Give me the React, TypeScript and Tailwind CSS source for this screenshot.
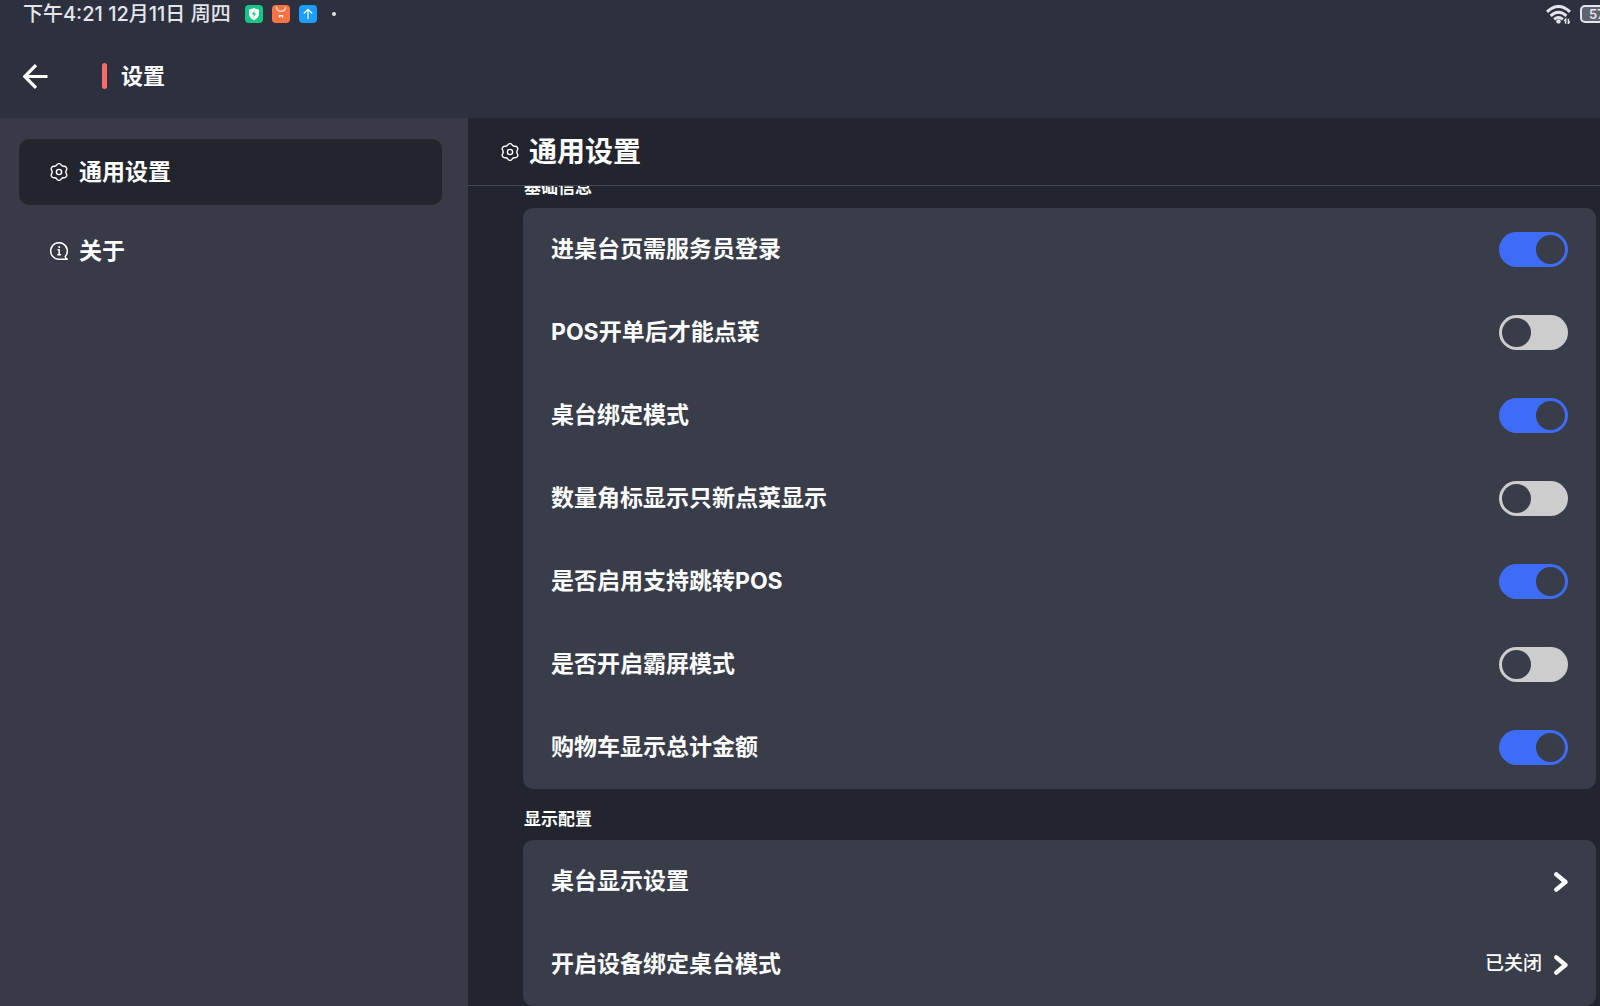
import React, { useState } from "react";

const switches = [
  { id: "login", label: "进桌台页需服务员登录", on: true },
  { id: "posOrder", label: "POS开单后才能点菜", on: false },
  { id: "tableBind", label: "桌台绑定模式", on: true },
  { id: "badge", label: "数量角标显示只新点菜显示", on: false },
  { id: "jumpPos", label: "是否启用支持跳转POS", on: true },
  { id: "kiosk", label: "是否开启霸屏模式", on: false },
  { id: "cartTotal", label: "购物车显示总计金额", on: true },
];

const links = [
  { label: "桌台显示设置", value: "" },
  { label: "开启设备绑定桌台模式", value: "已关闭" },
];

const GearIcon = () => (
  <svg className="size-[18px] shrink-0" viewBox="0 0 18 18" fill="none" stroke="currentColor" strokeWidth="1.4" strokeLinejoin="round">
    <path d="M6.6 2.2C7.6 .1 10.4 .1 11.4 2.2C11.9 3.1 12.5 3.4 13.5 3.3C16 3 17.6 5.3 16.3 7.4C15.6 8.5 15.6 9.5 16.3 10.6C17.6 12.7 16 15 13.5 14.7C12.5 14.6 11.9 14.9 11.4 15.8C10.4 17.9 7.6 17.9 6.6 15.8C6.1 14.9 5.5 14.6 4.5 14.7C2 15 .4 12.7 1.7 10.6C2.4 9.5 2.4 8.5 1.7 7.4C.4 5.3 2 3 4.5 3.3C5.5 3.4 6.1 3.1 6.6 2.2Z" />
    <circle cx="9" cy="9" r="2.6" />
  </svg>
);

const InfoIcon = () => (
  <svg className="size-[18px] shrink-0" viewBox="0 0 18 18" fill="none" stroke="currentColor" strokeWidth="1.5" strokeLinecap="round" strokeLinejoin="round">
    <path d="M17.3 17.3H9A8.3 8.3 0 1 1 15.2 14.5Q15.4 16.4 17.3 17.3Z" />
    <path d="M8 7.8H9.2V12.6M7.8 12.8H10.5" />
    <path d="M9.2 4.9V5.2" strokeWidth="1.8" />
  </svg>
);

const Chevron = () => (
  <svg className="h-5 w-[14px]" viewBox="0 0 14 20" fill="none" stroke="currentColor" strokeWidth="4.4" strokeLinecap="round" strokeLinejoin="round">
    <path d="M2.3 2.4L11.4 10L2.3 17.6" />
  </svg>
);

const StatusBar = () => (
  <div className="flex h-7 items-center pl-[23px] text-[#e4e5ea]">
    <span className="text-[20px] leading-7 font-medium">下午4:21 12月11日 周四</span>
    <div className="ml-[14px] flex gap-[9px]">
      <svg className="size-[18px]" viewBox="0 0 18 18">
        <rect width="18" height="18" rx="4" fill="#14c784" />
        <path d="M9 3L14 4.8V9.3Q13.6 13 9 15.2Q4.4 13 4 9.3V4.8Z" fill="#fff" />
        <path d="M9.8 5.5L6.8 9.6H8.8L8.2 12.6L11.2 8.5H9.2Z" fill="#14c784" />
      </svg>
      <svg className="size-[18px]" viewBox="0 0 18 18" fill="none">
        <rect width="18" height="18" rx="4" fill="#ff7343" />
        <path d="M4.3 1.8Q5 6.4 9 6.4T13.7 1.8" stroke="#ffe3d8" strokeWidth="1.2" />
        <path d="M7.5 12.4V10.6H10.5V12.4" stroke="#fff" strokeWidth="1.4" />
      </svg>
      <svg className="size-[18px]" viewBox="0 0 18 18" fill="none">
        <rect width="18" height="18" rx="4" fill="#1ba0ff" />
        <path d="M9 14V4.5M4.8 8.5L9 4.3L13.2 8.5" stroke="#fff" strokeWidth="1.2" />
      </svg>
    </div>
    <span className="ml-[15px] size-1 rounded-full bg-current" />
    <div className="-mr-3 ml-auto flex items-center gap-[9px]">
      <svg className="h-[19px] w-[25px]" viewBox="0 0 25 19" fill="none" stroke="currentColor" strokeWidth="3">
        <path d="M1 6.8Q12.5 -3.8 24 6.8" />
        <path d="M4.6 10.8Q12.5 3.8 20.4 10.8" />
        <path d="M8.2 14.4Q12.5 10.6 16.8 14.4" />
        <circle cx="12.5" cy="16.4" r="2.2" fill="currentColor" stroke="none" />
        <path d="M19.6 18.8V14.3L18.2 16M22.4 13.8V18.3L23.8 16.6" strokeWidth="1.5" />
      </svg>
      <div className="h-[18px] w-8 rounded-[5px] border-2 border-current bg-[#60626e] pl-[7px] text-[13px] leading-[14px] font-semibold">57</div>
    </div>
  </div>
);

const App: React.FC = () => {
  const [values, setValues] = useState<Record<string, boolean>>(
    Object.fromEntries(switches.map((s) => [s.id, s.on]))
  );

  return (
    <div className="flex h-screen flex-col overflow-hidden bg-[#22252e] font-['Inter','Noto_Sans_CJK_SC',sans-serif] text-white">
      <header className="shrink-0 bg-[#2d303f]">
        <StatusBar />
        <div className="flex h-[90px] items-center pt-1.5 pl-[23px]">
          <button aria-label="返回">
            <svg className="size-[25px]" viewBox="0 0 25 25" fill="none" stroke="currentColor" strokeWidth="3.2">
              <path d="M24.5 12.5H2M13 1.2L1.8 12.5L13 23.8" />
            </svg>
          </button>
          <span className="ml-[54px] h-[26px] w-[5px] rounded-full bg-[#fd6b66]" />
          <h1 className="ml-[14px] text-[22px] font-bold">设置</h1>
        </div>
      </header>

      <div className="flex min-h-0 flex-1">
        <nav className="flex w-[468px] shrink-0 flex-col gap-[13px] bg-[#393a47] pt-[21px] pr-[26px] pl-[19px] text-[23px] font-bold">
          <button className="flex h-[66px] items-center gap-[11px] rounded-[10px] bg-[#22252e] pl-[31px]">
            <GearIcon />
            通用设置
          </button>
          <button className="flex h-[66px] items-center gap-[11px] rounded-[10px] pl-[31px]">
            <InfoIcon />
            关于
          </button>
        </nav>

        <main className="flex min-w-0 flex-1 flex-col">
          <div className="flex h-[68px] shrink-0 items-center gap-[10px] border-b border-[#454857] pl-[33px]">
            <GearIcon />
            <h2 className="text-[28px] font-bold">通用设置</h2>
          </div>

          <div className="min-h-0 flex-1 overflow-hidden pr-1 pl-[55px]">
            <section className="-mt-[29px]">
              <h3 className="h-[51px] pt-[9px] pl-px text-[17px] leading-[42px] font-bold">基础信息</h3>
              <div className="rounded-[10px] bg-[#393c49] px-7">
                {switches.map((s) => (
                  <label key={s.id} className="flex h-[83px] items-center justify-between text-[23px] font-bold">
                    {s.label}
                    <input
                      type="checkbox"
                      role="switch"
                      checked={values[s.id]}
                      onChange={(e) => setValues({ ...values, [s.id]: e.target.checked })}
                      className="flex h-[35px] w-[69px] appearance-none items-center rounded-full bg-[#cdcdcd] px-[3px] before:size-[29px] before:rounded-full before:bg-[#393c49] checked:justify-end checked:bg-[#3d6cf6]"
                    />
                  </label>
                ))}
              </div>
            </section>

            <section>
              <h3 className="h-[51px] pt-[9px] pl-px text-[17px] leading-[42px] font-bold">显示配置</h3>
              <div className="rounded-[10px] bg-[#393c49] px-7">
                {links.map((l) => (
                  <button key={l.label} className="flex h-[83px] w-full items-center">
                    <span className="text-[23px] font-bold">{l.label}</span>
                    <span className="mr-3 ml-auto text-[19px] font-medium">{l.value}</span>
                    <Chevron />
                  </button>
                ))}
              </div>
            </section>
          </div>
        </main>
      </div>
    </div>
  );
};

export default App;
